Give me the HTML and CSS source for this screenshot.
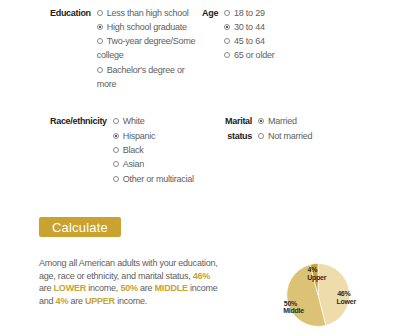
FILE: index.html
```html
<!DOCTYPE html>
<html lang="en">
<head>
    <meta charset="UTF-8">
    <meta name="viewport" content="width=device-width, initial-scale=1.0">
    <title>Income calculator</title>
    <link rel="stylesheet" href="styles.css">
</head>
<body>
    <div class="quiz">
        <div class="row row-top">
            <div class="group first">
                <div class="label">Education</div>
                <div class="options">
                    <div class="opt"><span class="radio"></span>Less than high school</div>
                    <div class="opt"><span class="radio checked"></span>High school graduate</div>
                    <div class="opt"><span class="radio"></span>Two-year degree/Some college</div>
                    <div class="opt"><span class="radio"></span>Bachelor's degree or more</div>
                </div>
            </div>
            <div class="group second">
                <div class="label">Age</div>
                <div class="options">
                    <div class="opt"><span class="radio"></span>18 to 29</div>
                    <div class="opt"><span class="radio checked"></span>30 to 44</div>
                    <div class="opt"><span class="radio"></span>45 to 64</div>
                    <div class="opt"><span class="radio"></span>65 or older</div>
                </div>
            </div>
        </div>

        <div class="row row-bottom">
            <div class="group first">
                <div class="label">Race/ethnicity</div>
                <div class="options">
                    <div class="opt"><span class="radio"></span>White</div>
                    <div class="opt"><span class="radio checked"></span>Hispanic</div>
                    <div class="opt"><span class="radio"></span>Black</div>
                    <div class="opt"><span class="radio"></span>Asian</div>
                    <div class="opt"><span class="radio"></span>Other or multiracial</div>
                </div>
            </div>
            <div class="group second">
                <div class="label label-right">Marital status</div>
                <div class="options">
                    <div class="opt"><span class="radio checked"></span>Married</div>
                    <div class="opt"><span class="radio"></span>Not married</div>
                </div>
            </div>
        </div>

        <button class="calc">Calculate</button>

        <div class="result">
            <p class="summary">Among all American adults with your education, age, race or ethnicity, and marital status, <b>46%</b> are <b>LOWER</b> income, <b>50%</b> are <b>MIDDLE</b> income and <b>4%</b> are <b>UPPER</b> income.</p>
            <svg class="pie" width="84" height="70" viewBox="0 0 84 70">
                <path class="lower" d="M40 34 L40 2.5 A31.5 31.5 0 0 1 47.83 64.51 Z"/>
                <path class="middle" d="M40 34 L47.83 64.51 A31.5 31.5 0 0 1 32.17 3.49 Z"/>
                <path class="upper" d="M40 34 L32.17 3.49 A31.5 31.5 0 0 1 40 2.5 Z"/>
                <text x="29.5" y="11.2">4%</text>
                <text x="29.2" y="18.8">Upper</text>
                <text x="59.2" y="35.2">46%</text>
                <text x="58.5" y="43">Lower</text>
                <text x="5.8" y="44.5">50%</text>
                <text x="5.2" y="52.3">Middle</text>
            </svg>
        </div>
    </div>
</body>
</html>
```

FILE: styles.css
```css
* {
    margin: 0;
    padding: 0;
    box-sizing: border-box;
}

body {
    background: #fff;
    font-family: 'Liberation Sans', Arial, sans-serif;
    color: #5e5e60;
}

.quiz {
    padding-top: 5.5px;
}

.row {
    display: flex;
    padding-left: 50px;
}

.row-bottom {
    margin-top: 23.2px;
}

.group {
    display: flex;
    align-items: flex-start;
}

.group.first {
    width: 152px;
}

.label {
    font-size: 9px;
    font-weight: bold;
    letter-spacing: -0.3px;
    color: #222;
    line-height: 14.3px;
    margin-right: 6px;
}

.label-right {
    width: 50px;
    text-align: right;
    padding-left: 18px;
}

.options {
    font-size: 9px;
    letter-spacing: -0.25px;
    line-height: 14.3px;
    flex: 1;
}

.radio {
    display: inline-block;
    width: 6px;
    height: 6px;
    border: 1px solid #8a8a8a;
    border-radius: 50%;
    margin-right: 4px;
    vertical-align: 0;
    position: relative;
}

.radio.checked::after {
    content: '';
    position: absolute;
    left: 1px;
    top: 1px;
    width: 2px;
    height: 2px;
    border-radius: 50%;
    background: #222;
}

.calc {
    display: block;
    margin: 31.3px 0 0 39px;
    width: 82px;
    height: 19.5px;
    border: none;
    border-radius: 2px;
    background: #c9a230;
    color: #fff;
    font-family: 'Liberation Sans', Arial, sans-serif;
    font-size: 13px;
    letter-spacing: 0.2px;
}

.result {
    display: flex;
    align-items: flex-start;
    margin-top: 20.3px;
    padding-left: 39px;
}

.summary {
    width: 185px;
    font-size: 9px;
    letter-spacing: -0.23px;
    line-height: 12.67px;
}

.summary b {
    color: #c9a230;
}

.pie {
    margin-left: 53.5px;
    margin-top: 3.5px;
}

.pie path {
    stroke: #fff;
    stroke-width: 0.7;
}

.pie .lower { fill: #eedcab; }
.pie .middle { fill: #dcc274; }
.pie .upper { fill: #c7a12b; }

.pie text {
    font-family: 'Liberation Sans', Arial, sans-serif;
    font-size: 7px;
    font-weight: bold;
    letter-spacing: -0.25px;
    fill: #2a2a2a;
}
```
